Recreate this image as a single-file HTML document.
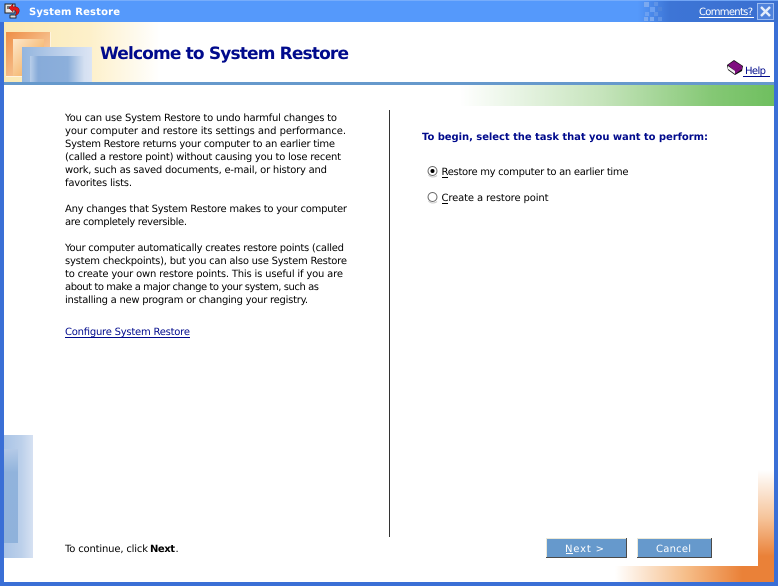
<!DOCTYPE html>
<html><head><meta charset="utf-8"><title>System Restore</title>
<style>html,body{margin:0;padding:0;background:#fff}svg{display:block}text{font-family:"DejaVu Sans",sans-serif;font-size:10px;fill:#000;text-rendering:geometricPrecision}</style>
</head><body>
<svg xmlns="http://www.w3.org/2000/svg" width="778" height="586" viewBox="0 0 778 586">
<defs>
<linearGradient id="tb" x1="0" x2="1" y1="0" y2="0"><stop offset="0" stop-color="#5599fb"/><stop offset=".82" stop-color="#5599fb"/><stop offset=".86" stop-color="#3d75d6"/><stop offset="1" stop-color="#3a6fd0"/></linearGradient>
<linearGradient id="hd" x1="0" x2="1" y1="0" y2="0"><stop offset="0" stop-color="#fbe9b4"/><stop offset=".55" stop-color="#fdf0ca"/><stop offset="1" stop-color="#fff"/></linearGradient>
<linearGradient id="gr" x1="0" x2="1" y1="0" y2="0"><stop offset="0" stop-color="#fff"/><stop offset=".45" stop-color="#c6e4bc"/><stop offset=".8" stop-color="#85c875"/><stop offset="1" stop-color="#6fbf5f"/></linearGradient>
<linearGradient id="or1" x1="0" x2="1" y1="0" y2="0"><stop offset="0" stop-color="#fff"/><stop offset=".45" stop-color="#f6bd88"/><stop offset=".8" stop-color="#ea8138"/><stop offset="1" stop-color="#ea8138"/></linearGradient>
<linearGradient id="or2" x1="0" x2="0" y1="0" y2="1"><stop offset="0" stop-color="#fff"/><stop offset=".5" stop-color="#f6c49a"/><stop offset=".9" stop-color="#ea8138"/><stop offset="1" stop-color="#ea8138"/></linearGradient>
<linearGradient id="o1" x1="0" x2="1" y1="0" y2="1"><stop offset="0" stop-color="#ee8d45"/><stop offset=".6" stop-color="#f6c08d"/><stop offset="1" stop-color="#fbdcb8"/></linearGradient>
<linearGradient id="o2" x1="0" x2="1" y1="0" y2="1"><stop offset="0" stop-color="#fde8cc"/><stop offset="1" stop-color="#f2a146"/></linearGradient>
<linearGradient id="b1" x1="0" x2="1" y1="0" y2="0"><stop offset="0" stop-color="#93b5de"/><stop offset=".45" stop-color="#b5cbe8"/><stop offset="1" stop-color="#dce5f4"/></linearGradient>
<linearGradient id="b2" x1="0" x2="1" y1="0" y2="0"><stop offset="0" stop-color="#b9cfea"/><stop offset=".15" stop-color="#87abd9"/><stop offset=".7" stop-color="#8cafdb"/><stop offset="1" stop-color="#d3dff0"/></linearGradient>
<linearGradient id="s1" x1="0" x2="1" y1="0" y2="0"><stop offset="0" stop-color="#a9c4e6"/><stop offset=".6" stop-color="#bcd0ea"/><stop offset="1" stop-color="#d6e1f2"/></linearGradient>
<linearGradient id="s2" x1="0" x2="0" y1="0" y2="1"><stop offset="0" stop-color="#b4cae7"/><stop offset=".25" stop-color="#91b3dc"/><stop offset="1" stop-color="#8fb2db"/></linearGradient>
</defs>

<!-- window frame -->
<rect width="778" height="586" fill="#3a6fd6"/>
<rect x="4" y="22" width="770" height="560" fill="#fff"/>

<!-- title bar -->
<rect width="778" height="22" fill="url(#tb)"/>
<rect width="778" height="1" fill="#7fb2fb" opacity=".8"/>
<g fill="#7ba9f0">
<rect x="644" y="2" width="5" height="5"/><rect x="654" y="2" width="4" height="4" fill="#5f93e6"/>
<rect x="650" y="7" width="5" height="5" fill="#6ba0f2"/><rect x="658" y="7" width="4" height="4" fill="#4f85dc"/>
<rect x="645" y="12" width="4" height="4" fill="#6ba0f2"/><rect x="654" y="12" width="4" height="4" fill="#5f93e6"/>
<rect x="644" y="17" width="4" height="4"/><rect x="650" y="17" width="4" height="4"/><rect x="658" y="17" width="4" height="4" fill="#5f93e6"/>
</g>
<!-- app icon -->
<rect x="5" y="4" width="10" height="9" fill="#e8e8e8" stroke="#222" stroke-width="1"/>
<rect x="7" y="6" width="3" height="3" fill="#777"/>
<rect x="11" y="14" width="3" height="2" fill="#39c"/>
<rect x="10" y="15" width="6" height="3" fill="#ddd" stroke="#111" stroke-width=".8"/>
<path d="M9 8 L13 4 L13 7 C18 6 20 9 19 12 C18.500 14 17 15 15 15.500 C17 13 17 10 13 10 L13 12Z" fill="#e01818" stroke="#700" stroke-width=".5"/>
<text x="29" y="15" textLength="91" lengthAdjust="spacing" style="fill:#fff;font-weight:bold">System Restore</text>
<text x="699" y="15" textLength="54" lengthAdjust="spacing" style="fill:#fff">Comments?</text>
<rect x="699" y="17" width="55" height="1" fill="#fff"/>
<rect x="757.500" y="3.500" width="16" height="16" fill="#4f82dc" stroke="#9dbcf0"/>
<path d="M761 7 L770 16 M770 7 L761 16" stroke="#e4edfb" stroke-width="2.400"/>

<!-- header -->
<rect x="4" y="22" width="156" height="60" fill="url(#hd)"/>
<rect x="6" y="32" width="45" height="45" fill="#fff3df"/>
<rect x="6" y="32" width="44" height="44" fill="url(#o1)"/>
<rect x="13" y="39" width="31" height="37" fill="url(#o2)"/>
<rect x="22" y="47" width="70" height="35" fill="url(#b1)"/>
<rect x="30" y="56" width="54" height="26" fill="url(#b2)"/>
<rect x="4" y="82" width="770" height="3" fill="#6699cc"/>
<text x="100" y="59" textLength="249" lengthAdjust="spacing" style="font-size:17px;font-weight:bold;fill:#000a8c">Welcome to System Restore</text>

<!-- help -->
<path d="M727 65 L734 60 L743 66 L742 71 L735 75 L728 70Z" fill="#111"/>
<path d="M728 65 L734 61 L742 66 L735 71Z" fill="#800f80"/>
<path d="M728 66 L735 71 L735 74 L728 69Z" fill="#f2f2f2"/>
<path d="M735 71 L742 66 L742 69 L735 74Z" fill="#800f80"/>
<text x="745" y="74" textLength="21" lengthAdjust="spacing" style="fill:#000a8c">Help</text>
<rect x="743" y="76" width="27" height="1" fill="#000a8c"/>

<!-- green band -->
<rect x="460" y="85" width="314" height="21" fill="url(#gr)"/>

<!-- left text -->
<text x="65" y="121" textLength="272" lengthAdjust="spacing">You can use System Restore to undo harmful changes to</text>
<text x="65" y="134" textLength="281" lengthAdjust="spacing">your computer and restore its settings and performance.</text>
<text x="65" y="147" textLength="270" lengthAdjust="spacing">System Restore returns your computer to an earlier time</text>
<text x="65" y="160" textLength="276" lengthAdjust="spacing">(called a restore point) without causing you to lose recent</text>
<text x="65" y="173" textLength="262" lengthAdjust="spacing">work, such as saved documents, e-mail, or history and</text>
<text x="65" y="186" textLength="67" lengthAdjust="spacing">favorites lists.</text>
<text x="65" y="212" textLength="282" lengthAdjust="spacing">Any changes that System Restore makes to your computer</text>
<text x="65" y="225" textLength="122" lengthAdjust="spacing">are completely reversible.</text>
<text x="65" y="251" textLength="279" lengthAdjust="spacing">Your computer automatically creates restore points (called</text>
<text x="65" y="264" textLength="282" lengthAdjust="spacing">system checkpoints), but you can also use System Restore</text>
<text x="65" y="277" textLength="278" lengthAdjust="spacing">to create your own restore points. This is useful if you are</text>
<text x="65" y="290" textLength="254" lengthAdjust="spacing">about to make a major change to your system, such as</text>
<text x="65" y="303" textLength="243" lengthAdjust="spacing">installing a new program or changing your registry.</text>
<text x="65" y="335" textLength="125" lengthAdjust="spacing" style="fill:#000a8c">Configure System Restore</text>
<rect x="65" y="337" width="125" height="1" fill="#000a8c"/>

<!-- divider -->
<rect x="389" y="110" width="1" height="427" fill="#333"/>

<!-- right -->
<text x="422" y="140" textLength="286" lengthAdjust="spacing" style="font-weight:bold;fill:#000a8c">To begin, select the task that you want to perform:</text>
<circle cx="432.500" cy="171" r="4.500" fill="#fff" stroke="#666"/>
<path d="M428.500 175 A6 6 0 0 0 437 175.500" stroke="#ccc" fill="none"/>
<circle cx="432.500" cy="171" r="2" fill="#000"/>
<text x="441.500" y="175" textLength="187" lengthAdjust="spacing">Restore my computer to an earlier time</text>
<rect x="442" y="177" width="6" height="1" fill="#000"/>
<circle cx="432.500" cy="197" r="4.500" fill="#fff" stroke="#666"/>
<path d="M428.500 201 A6 6 0 0 0 437 201.500" stroke="#ccc" fill="none"/>
<text x="441.500" y="201" textLength="107" lengthAdjust="spacing">Create a restore point</text>
<rect x="442" y="203" width="6" height="1" fill="#000"/>

<!-- footer -->
<text x="65" y="552" textLength="83" lengthAdjust="spacing">To continue, click</text>
<text x="150" y="552" textLength="25" lengthAdjust="spacing" style="font-weight:bold">Next</text>
<text x="175.500" y="552">.</text>

<!-- buttons -->
<rect x="546" y="538" width="81" height="20" fill="#4a4a4a"/>
<rect x="546" y="538" width="80" height="19" fill="#ece9d8"/>
<rect x="547" y="539" width="79" height="18" fill="#6699cc"/>
<text x="565" y="552" textLength="39" lengthAdjust="spacing" style="fill:#fff">Next &gt;</text>
<rect x="566" y="553" width="7" height="1" fill="#fff"/>
<rect x="637" y="538" width="75" height="20" fill="#4a4a4a"/>
<rect x="637" y="538" width="74" height="19" fill="#ece9d8"/>
<rect x="638" y="539" width="73" height="18" fill="#6699cc"/>
<text x="656" y="552" textLength="35" lengthAdjust="spacing" style="fill:#fff">Cancel</text>

<!-- side art -->
<rect x="4" y="435" width="29" height="123" fill="url(#s1)"/>
<rect x="4" y="449" width="14" height="94" fill="url(#s2)"/>

<!-- orange corner -->
<rect x="615" y="566" width="159" height="16" fill="url(#or1)"/>
<rect x="758" y="470" width="16" height="96" fill="url(#or2)"/>
</svg>
</body></html>
